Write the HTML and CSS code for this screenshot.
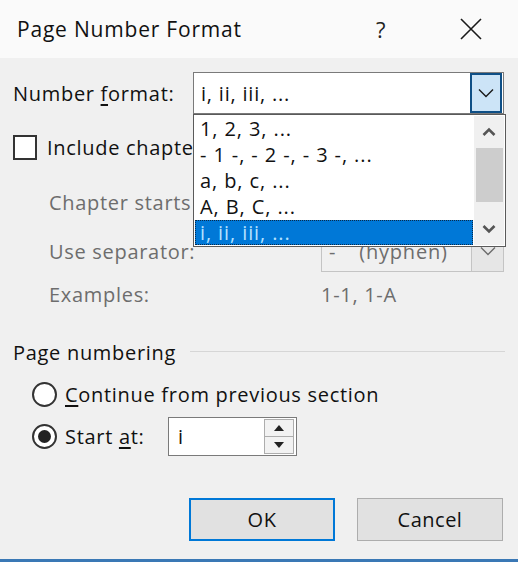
FILE: index.html
```html
<!DOCTYPE html>
<html>
<head>
<meta charset="utf-8">
<link rel="stylesheet" href="styles.css">
</head>
<body>
<div class="dialog">
  <div class="titlebar">
    <span class="title">Page Number Format</span>
    <span class="help">?</span>
    <span class="close">
      <svg width="22" height="22" viewBox="0 0 22 22"><path d="M1 1 L21 21 M21 1 L1 21" stroke="#1a1a1a" stroke-width="1.6" fill="none"/></svg>
    </span>
  </div>
  <div class="body">
    <div class="row r1">
      <span class="lbl w180">Number <u>f</u>ormat:</span>
      <div class="combo main">
        <span class="val">i, ii, iii, ...</span>
        <span class="drop active">
          <svg width="16" height="10" viewBox="0 0 16 10"><path d="M1 1.5 L8 8.5 L15 1.5" stroke="#1a1a1a" stroke-width="1.4" fill="none"/></svg>
        </span>
        <div class="listbox">
          <div class="items">
            <div class="item">1, 2, 3, ...</div>
            <div class="item">- 1 -, - 2 -, - 3 -, ...</div>
            <div class="item">a, b, c, ...</div>
            <div class="item">A, B, C, ...</div>
            <div class="item sel"><span class="focus">i, ii, iii, ...</span></div>
          </div>
          <div class="scroll">
            <span class="arrow">
              <svg width="14" height="10" viewBox="0 0 14 10"><path d="M1.5 8 L7 2.5 L12.5 8" stroke="#555" stroke-width="2.6" fill="none"/></svg>
            </span>
            <span class="thumb"></span>
            <span class="track"></span>
            <span class="arrow">
              <svg width="14" height="10" viewBox="0 0 14 10"><path d="M1.5 2 L7 7.5 L12.5 2" stroke="#555" stroke-width="2.6" fill="none"/></svg>
            </span>
          </div>
        </div>
      </div>
    </div>
    <div class="row r2">
      <span class="check"></span>
      <span class="lbl">Include chapter number</span>
    </div>
    <div class="row r3">
      <span class="lbl dis w308 ind">Chapter starts with style:</span>
      <div class="combo sub">
        <span class="val dis">Heading 1</span>
        <span class="drop"></span>
      </div>
    </div>
    <div class="row r4">
      <span class="lbl dis w308 ind">Use separator:</span>
      <div class="combo sub">
        <span class="val dis">-<span class="sep">(hyphen)</span></span>
        <span class="drop">
          <svg width="16" height="10" viewBox="0 0 16 10"><path d="M1 1.5 L8 8.5 L15 1.5" stroke="#6d6d6d" stroke-width="1.4" fill="none"/></svg>
        </span>
      </div>
    </div>
    <div class="row r5">
      <span class="lbl dis w308 ind">Examples:</span>
      <span class="lbl dis">1-1, 1-A</span>
    </div>
    <div class="row r6">
      <span class="lbl">Page numbering</span>
      <span class="rule"></span>
    </div>
    <div class="row r7">
      <span class="radio"></span>
      <span class="lbl"><u>C</u>ontinue from previous section</span>
    </div>
    <div class="row r8">
      <span class="radio on"></span>
      <span class="lbl w103">Start <u>a</u>t:</span>
      <div class="spinbox">
        <span class="val">i</span>
        <span class="spin">
          <span class="half"><svg width="10" height="6" viewBox="0 0 10 6"><path d="M0 6 L5 0 L10 6 Z" fill="#222"/></svg></span>
          <span class="half"><svg width="10" height="6" viewBox="0 0 10 6"><path d="M0 0 L5 6 L10 0 Z" fill="#222"/></svg></span>
        </span>
      </div>
    </div>
    <div class="row buttons">
      <span class="btn ok">OK</span>
      <span class="btn">Cancel</span>
    </div>
  </div>
  <div class="bottomline"></div>
</div>
</body>
</html>
```
FILE: styles.css
```css
* { box-sizing: border-box; }
html, body { margin: 0; padding: 0; }
body {
  width: 518px;
  height: 562px;
  overflow: hidden;
  background: #f0f0f0;
  font-family: "Open Sans", "Noto Sans", sans-serif;
  color: #111;
}
.dialog {
  width: 518px;
  height: 562px;
  display: flex;
  flex-direction: column;
}
.titlebar {
  height: 58px;
  flex: none;
  background: #fafafa;
  display: flex;
  align-items: center;
  padding-left: 17px;
}
.title {
  font-size: 21px;
  flex: 1;
  color: #111;
  letter-spacing: 0.8px;
}
.help {
  font-size: 22px;
  width: 14px;
  margin-right: 70px;
  color: #222;
}
.close {
  width: 22px;
  height: 22px;
  margin-right: 36px;
  display: flex;
}
.body {
  flex: 1;
  padding: 14px 13px 0 13px;
  display: flex;
  flex-direction: column;
}
.row {
  display: flex;
  align-items: center;
  height: 42px;
  flex: none;
}
.r2 { margin-top: 12px; }
.r3 { margin-top: 13px; }
.r4 { margin-top: 7px; }
.r5 { margin-top: 1px; }
.r6 { margin-top: 16px; }
.buttons { margin-top: 41px; height: 43px; justify-content: flex-end; padding-right: 2px; gap: 22px; }

.lbl { font-size: 20px; letter-spacing: 0.7px; white-space: nowrap; }
.lbl u { text-decoration-thickness: 1.5px; text-underline-offset: 3px; }
.dis { color: #6d6d6d; }
.w180 { width: 180px; flex: none; }
.w308 { width: 308px; flex: none; }
.w103 { width: 103px; flex: none; }
.ind { padding-left: 36px; }

.combo {
  position: relative;
  height: 42px;
  background: #fff;
  border: 1px solid #7a7a7a;
  display: flex;
  align-items: center;
}
.combo.main { width: 311px; }
.combo.sub { width: 183px; background: #f0f0f0; border-color: #c4c4c4; }
.val { flex: 1; font-size: 20px; letter-spacing: 0.8px; padding-left: 7px; white-space: nowrap; }
.sep { margin-left: 23px; }
.drop {
  width: 32px;
  height: 40px;
  display: flex;
  align-items: center;
  justify-content: center;
  border-left: 1px solid #c4c4c4;
  background: #e6e6e6;
}
.drop.active {
  height: 40px;
  margin-right: 1px;
  border: 2px solid #0e4f86;
  background: #cce4f7;
}

.listbox {
  position: absolute;
  top: 41px;
  left: -1px;
  width: 313px;
  height: 133px;
  background: #fff;
  border: 1px solid #5a5a5a;
  display: flex;
  padding: 1px;
  z-index: 5;
}
.items { flex: 1; display: flex; flex-direction: column; }
.item {
  height: 26px;
  font-size: 20px;
  letter-spacing: 0.9px;
  line-height: 26px;
  padding-left: 5px;
  color: #111;
  white-space: nowrap;
}
.item.sel {
  height: 25px;
  background: #0078d7;
  color: #b5e2ff;
  padding-left: 0;
  line-height: 23px;
  border: 1px dotted #0a2a4a;
  margin-right: 1px;
}
.item.sel .focus { padding-left: 4px; }
.scroll {
  width: 30px;
  flex: none;
  background: #f0f0f0;
  display: flex;
  flex-direction: column;
  align-items: center;
}
.arrow { height: 32px; width: 100%; display: flex; align-items: center; justify-content: center; flex: none; }
.thumb { width: 27px; height: 54px; background: #cdcdcd; flex: none; }
.track { flex: 1; }

.check {
  width: 24px;
  height: 25px;
  border: 2px solid #333;
  background: #fff;
  margin-right: 10px;
  flex: none;
}

.rule {
  flex: 1;
  height: 1px;
  background: #d6d6d6;
  margin-left: 14px;
  margin-top: -2px;
}

.radio {
  width: 25px;
  height: 25px;
  border: 2px solid #333;
  border-radius: 50%;
  background: #fff;
  margin-left: 19px;
  margin-right: 8px;
  flex: none;
  display: flex;
  align-items: center;
  justify-content: center;
}
.radio.on::after {
  content: "";
  width: 13px;
  height: 13px;
  border-radius: 50%;
  background: #222;
}
.spinbox {
  width: 129px;
  height: 39px;
  background: #fff;
  border: 1px solid #7a7a7a;
  display: flex;
  align-items: center;
  padding-right: 2px;
}
.spinbox .val { padding-left: 9px; }
.spin {
  width: 30px;
  height: 35px;
  display: flex;
  flex-direction: column;
  border: 1px solid #adadad;
  background: #f2f2f2;
}
.half {
  flex: 1;
  display: flex;
  align-items: center;
  justify-content: center;
}
.half + .half { border-top: 1px solid #adadad; }

.btn {
  width: 146px;
  height: 43px;
  background: #e1e1e1;
  border: 1px solid #adadad;
  font-size: 20px;
  letter-spacing: 0.5px;
  display: flex;
  align-items: center;
  justify-content: center;
  color: #111;
}
.btn.ok { border: 2px solid #0078d7; }
.bottomline {
  height: 3px;
  background: #3a78b5;
  flex: none;
}
```
